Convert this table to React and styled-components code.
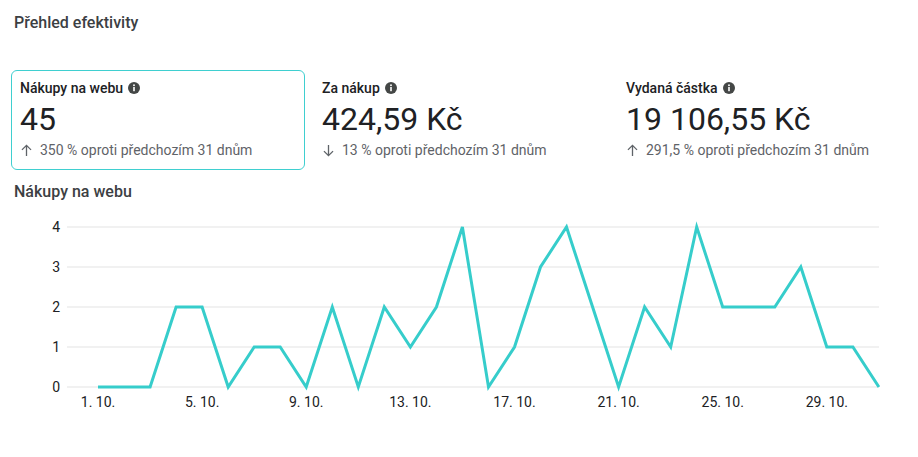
import React from "react";
import styled, { createGlobalStyle } from "styled-components";

const Global = createGlobalStyle`
  html, body { margin: 0; padding: 0; background: #fff; }
  body { font-family: Roboto, "Noto Sans", Arial, sans-serif; color: #202124; }
`;

const Page = styled.div`
  width: 918px;
  height: 457px;
  box-sizing: border-box;
  padding: 12px 13px 0 11px;
  overflow: hidden;
`;

const Title = styled.h1`
  margin: 0 0 0 3px;
  font-size: 16px;
  line-height: 22px;
  font-weight: 500;
  color: #3c4043;
`;

const Metrics = styled.div`
  margin-top: 36px;
  display: grid;
  grid-template-columns: 294px 296px 294px;
  column-gap: 8px;
`;

const Metric = styled.div`
  box-sizing: border-box;
  height: 100px;
  padding: 8px 8px 0 8px;
  border: 1px solid ${(p) => (p.$active ? "#3fcfd0" : "transparent")};
  border-radius: 6px;
`;

const Label = styled.div`
  display: flex;
  align-items: center;
  gap: 5px;
  font-size: 14px;
  line-height: 18px;
  font-weight: 500;
  color: #202124;
`;

const Value = styled.div`
  margin-top: 3px;
  font-size: 32px;
  line-height: 38px;
  font-weight: 400;
  color: #202124;
`;

const Change = styled.div`
  margin-top: 3px;
  display: flex;
  align-items: center;
  gap: 7px;
  font-size: 14px;
  line-height: 18px;
  color: #5f6368;
`;

const ChartTitle = styled.h2`
  margin: 11px 0 0 3px;
  font-size: 16px;
  line-height: 22px;
  font-weight: 500;
  color: #3c4043;
`;

const ChartSvg = styled.svg`
  display: block;
  margin-left: -11px;
`;

const AxisText = styled.text`
  font-family: Roboto, "Noto Sans", Arial, sans-serif;
  font-size: 14px;
  fill: #202124;
`;

const InfoIcon = () => (
  <svg width="12" height="12" viewBox="0 0 12 12">
    <circle cx="6" cy="6" r="6" fill="#444746" />
    <rect x="5.2" y="5" width="1.6" height="4.2" fill="#fff" />
    <circle cx="6" cy="3.3" r="0.95" fill="#fff" />
  </svg>
);

const Arrow = ({ down }) => (
  <svg width="13" height="13" viewBox="0 0 12 12" style={down ? { transform: "rotate(180deg)" } : undefined}>
    <path d="M6 1.2 L6 11 M1.8 5.4 L6 1.2 L10.2 5.4" stroke="#5f6368" strokeWidth="1.2" fill="none" />
  </svg>
);

const metrics = [
  { label: "Nákupy na webu", value: "45", change: "350 % oproti předchozím 31 dnům", down: false, active: true },
  { label: "Za nákup", value: "424,59 Kč", change: "13 % oproti předchozím 31 dnům", down: true },
  { label: "Vydaná částka", value: "19 106,55 Kč", change: "291,5 % oproti předchozím 31 dnům", down: false },
];

const data = [0, 0, 0, 2, 2, 0, 1, 1, 0, 2, 0, 2, 1, 2, 4, 0, 1, 3, 4, 2, 0, 2, 1, 4, 2, 2, 2, 3, 1, 1, 0];

const X0 = 98;
const DX = 26.03;
const Y0 = 184;
const DY = 40;

export default function App() {
  const pts = data.map((v, i) => `${(X0 + i * DX).toFixed(1)},${Y0 - v * DY}`).join(" ");
  const xLabels = [0, 4, 8, 12, 16, 20, 24, 28];
  return (
    <>
      <Global />
      <Page>
        <Title>Přehled efektivity</Title>
        <Metrics>
          {metrics.map((m) => (
            <Metric key={m.label} $active={m.active}>
              <Label>
                {m.label}
                <InfoIcon />
              </Label>
              <Value>{m.value}</Value>
              <Change>
                <Arrow down={m.down} />
                {m.change}
              </Change>
            </Metric>
          ))}
        </Metrics>
        <ChartTitle>Nákupy na webu</ChartTitle>
        <ChartSvg width="918" height="230" viewBox="0 0 918 230">
          {[0, 1, 2, 3, 4].map((v) => (
            <g key={v}>
              <line x1="67" x2="879" y1={Y0 - v * DY} y2={Y0 - v * DY} stroke="#e3e3e3" strokeWidth="1" />
              <AxisText x="60" y={Y0 - v * DY + 5} textAnchor="end">
                {v}
              </AxisText>
            </g>
          ))}
          <polyline points={pts} fill="none" stroke="#36cdcb" strokeWidth="3" strokeLinejoin="miter" />
          {xLabels.map((i) => (
            <AxisText key={i} x={X0 + i * DX} y="204" textAnchor="middle">
              {`${i + 1}. 10.`}
            </AxisText>
          ))}
        </ChartSvg>
      </Page>
    </>
  );
}
